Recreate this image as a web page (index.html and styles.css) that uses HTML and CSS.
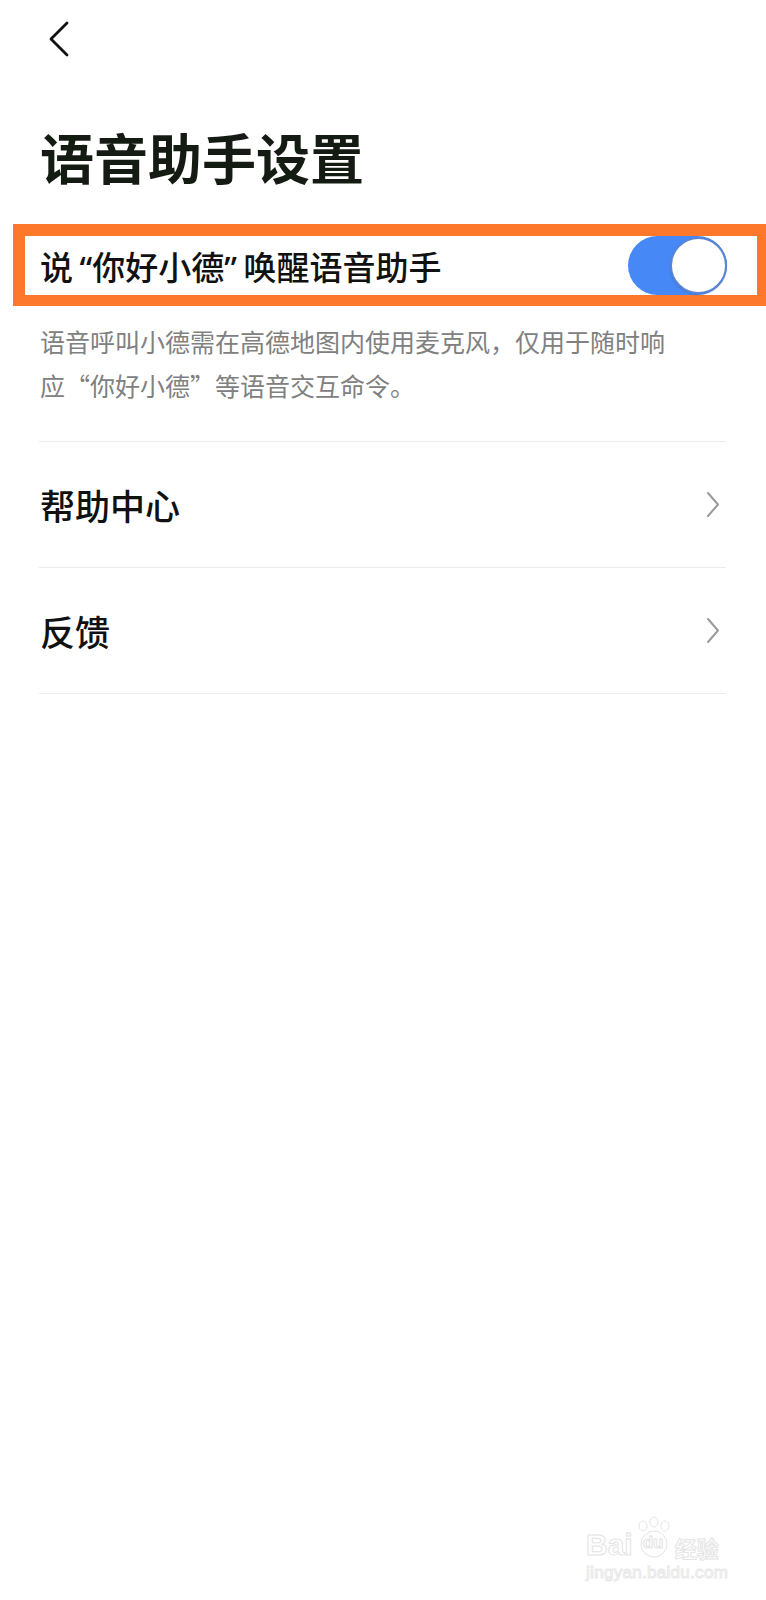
FILE: index.html
```html
<!DOCTYPE html>
<html lang="zh-CN">
<head>
    <meta charset="UTF-8">
    <meta name="viewport" content="width=device-width, initial-scale=1.0">
    <title>语音助手设置</title>
    <link rel="stylesheet" href="styles.css">
</head>
<body>
    <div class="page">
        <!-- Top bar with back arrow -->
        <div class="top-bar">
            <svg class="back-icon" width="22" height="36" viewBox="0 0 22 36">
                <path d="M19 2 L3 18 L19 34" fill="none" stroke="#111" stroke-width="2.8" stroke-linecap="round" stroke-linejoin="round"/>
            </svg>
        </div>

        <h1 class="page-title">语音助手设置</h1>

        <!-- Wake word switch (highlighted) -->
        <div class="highlight-box">
            <div class="switch-row">
                <span class="switch-label">说<span class="quote-open">“</span>你好小德<span class="quote-close">”</span>唤醒语音助手</span>
                <div class="toggle">
                    <div class="toggle-knob"></div>
                </div>
            </div>
        </div>

        <div class="switch-desc">
            <span class="desc-line">语音呼叫小德需在高德地图内使用麦克风，仅用于随时响</span>
            <span class="desc-line">应“你好小德”等语音交互命令。</span>
        </div>

        <!-- Menu list -->
        <div class="menu-list">
            <div class="menu-item">
                <span class="menu-text">帮助中心</span>
                <svg class="arrow-icon" width="14" height="27" viewBox="0 0 14 27">
                    <path d="M2 2 L12 13.5 L2 25" fill="none" stroke="#9a9a9a" stroke-width="2" stroke-linecap="round" stroke-linejoin="round"/>
                </svg>
            </div>
            <div class="menu-item">
                <span class="menu-text">反馈</span>
                <svg class="arrow-icon" width="14" height="27" viewBox="0 0 14 27">
                    <path d="M2 2 L12 13.5 L2 25" fill="none" stroke="#9a9a9a" stroke-width="2" stroke-linecap="round" stroke-linejoin="round"/>
                </svg>
            </div>
        </div>

        <!-- Watermark -->
        <div class="watermark">
            <div class="wm-top">
                <span class="wm-bai">Bai</span>
                <span class="wm-paw">
                    <svg width="42" height="42" viewBox="0 0 42 42">
                        <ellipse cx="21" cy="6" rx="4" ry="5" fill="none" stroke="#e4e4e4" stroke-width="1"/>
                        <ellipse cx="10" cy="10" rx="4" ry="5" fill="none" stroke="#e4e4e4" stroke-width="1"/>
                        <ellipse cx="32" cy="10" rx="4" ry="5" fill="none" stroke="#e4e4e4" stroke-width="1"/>
                        <circle cx="21" cy="28" r="13" fill="none" stroke="#e4e4e4" stroke-width="1"/>
                    </svg>
                    <span class="wm-du">du</span>
                </span>
                <span class="wm-jy">经验</span>
            </div>
            <div class="wm-url">jingyan.baidu.com</div>
        </div>
    </div>
</body>
</html>
```

FILE: styles.css
```css
body {
    margin: 0;
    background-color: #ffffff;
    font-family: "Noto Sans CJK SC", "Noto Sans", sans-serif;
    overflow-x: hidden;
}

.page {
    position: relative;
    min-height: 1600px;
    overflow: hidden;
}

.top-bar {
    height: 80px;
    padding-left: 48px;
    box-sizing: border-box;
    padding-top: 21px;
}

.back-icon {
    display: block;
}

.page-title {
    margin: 45px 0 35px 40px;
    font-size: 54px;
    line-height: 64px;
    font-weight: 700;
    color: #141b12;
}

.highlight-box {
    margin-left: 13px;
    width: 732px;
    border: 12px solid #fd782b;
    border-bottom-width: 11px;
    background-color: #ffffff;
}

.switch-row {
    display: flex;
    align-items: center;
    justify-content: space-between;
    height: 59px;
    padding: 0 30px 0 15px;
}

.switch-label {
    font-size: 33px;
    font-weight: 500;
    color: #111111;
    white-space: nowrap;
}

.quote-open,
.quote-close {
    font-family: "Noto Sans", sans-serif;
}

.quote-open {
    margin-left: 0.2em;
}

.quote-close {
    margin-right: 0.2em;
}

.toggle {
    display: flex;
    justify-content: flex-end;
    align-items: center;
    width: 99px;
    height: 59px;
    border-radius: 30px;
    background-color: #4689f6;
}

.toggle-knob {
    width: 53px;
    height: 53px;
    border-radius: 50%;
    background-color: #ffffff;
    border: 2px solid #5a84d4;
    box-shadow: 0 1px 2px rgba(0, 0, 0, 0.15);
}

.switch-desc {
    margin: 13px 0 34px 40px;
    font-size: 25px;
    line-height: 44px;
    color: #808080;
}

.desc-line {
    display: block;
    white-space: nowrap;
}

.menu-list {
    margin: 0 40px 0 39px;
    border-top: 1px solid #ececec;
}

.menu-item {
    display: flex;
    align-items: center;
    justify-content: space-between;
    height: 125px;
    padding: 0 6px 0 1px;
    border-bottom: 1px solid #ececec;
}

.menu-text {
    font-size: 35px;
    font-weight: 500;
    color: #111111;
}

.arrow-icon {
    display: block;
}

.watermark {
    position: absolute;
    left: 586px;
    top: 1514px;
    color: transparent;
    font-family: "Liberation Sans", "Noto Sans CJK SC", sans-serif;
}

.wm-top {
    display: flex;
    align-items: flex-end;
    height: 46px;
}

.wm-bai {
    font-size: 30px;
    line-height: 30px;
    font-weight: 700;
    -webkit-text-stroke: 1px #e4e4e4;
}

.wm-paw {
    position: relative;
    display: block;
    width: 42px;
    height: 44px;
}

.wm-paw svg {
    display: block;
}

.wm-du {
    position: absolute;
    left: 10px;
    top: 17px;
    font-size: 17px;
    font-weight: 700;
    -webkit-text-stroke: 1px #e4e4e4;
}

.wm-jy {
    font-size: 22px;
    line-height: 26px;
    font-weight: 700;
    -webkit-text-stroke: 1px #e4e4e4;
    font-family: "Noto Sans CJK SC", sans-serif;
}

.wm-url {
    margin-top: 4px;
    font-size: 17px;
    line-height: 18px;
    letter-spacing: 0.3px;
    -webkit-text-stroke: 1px #e8e8e8;
}
```
